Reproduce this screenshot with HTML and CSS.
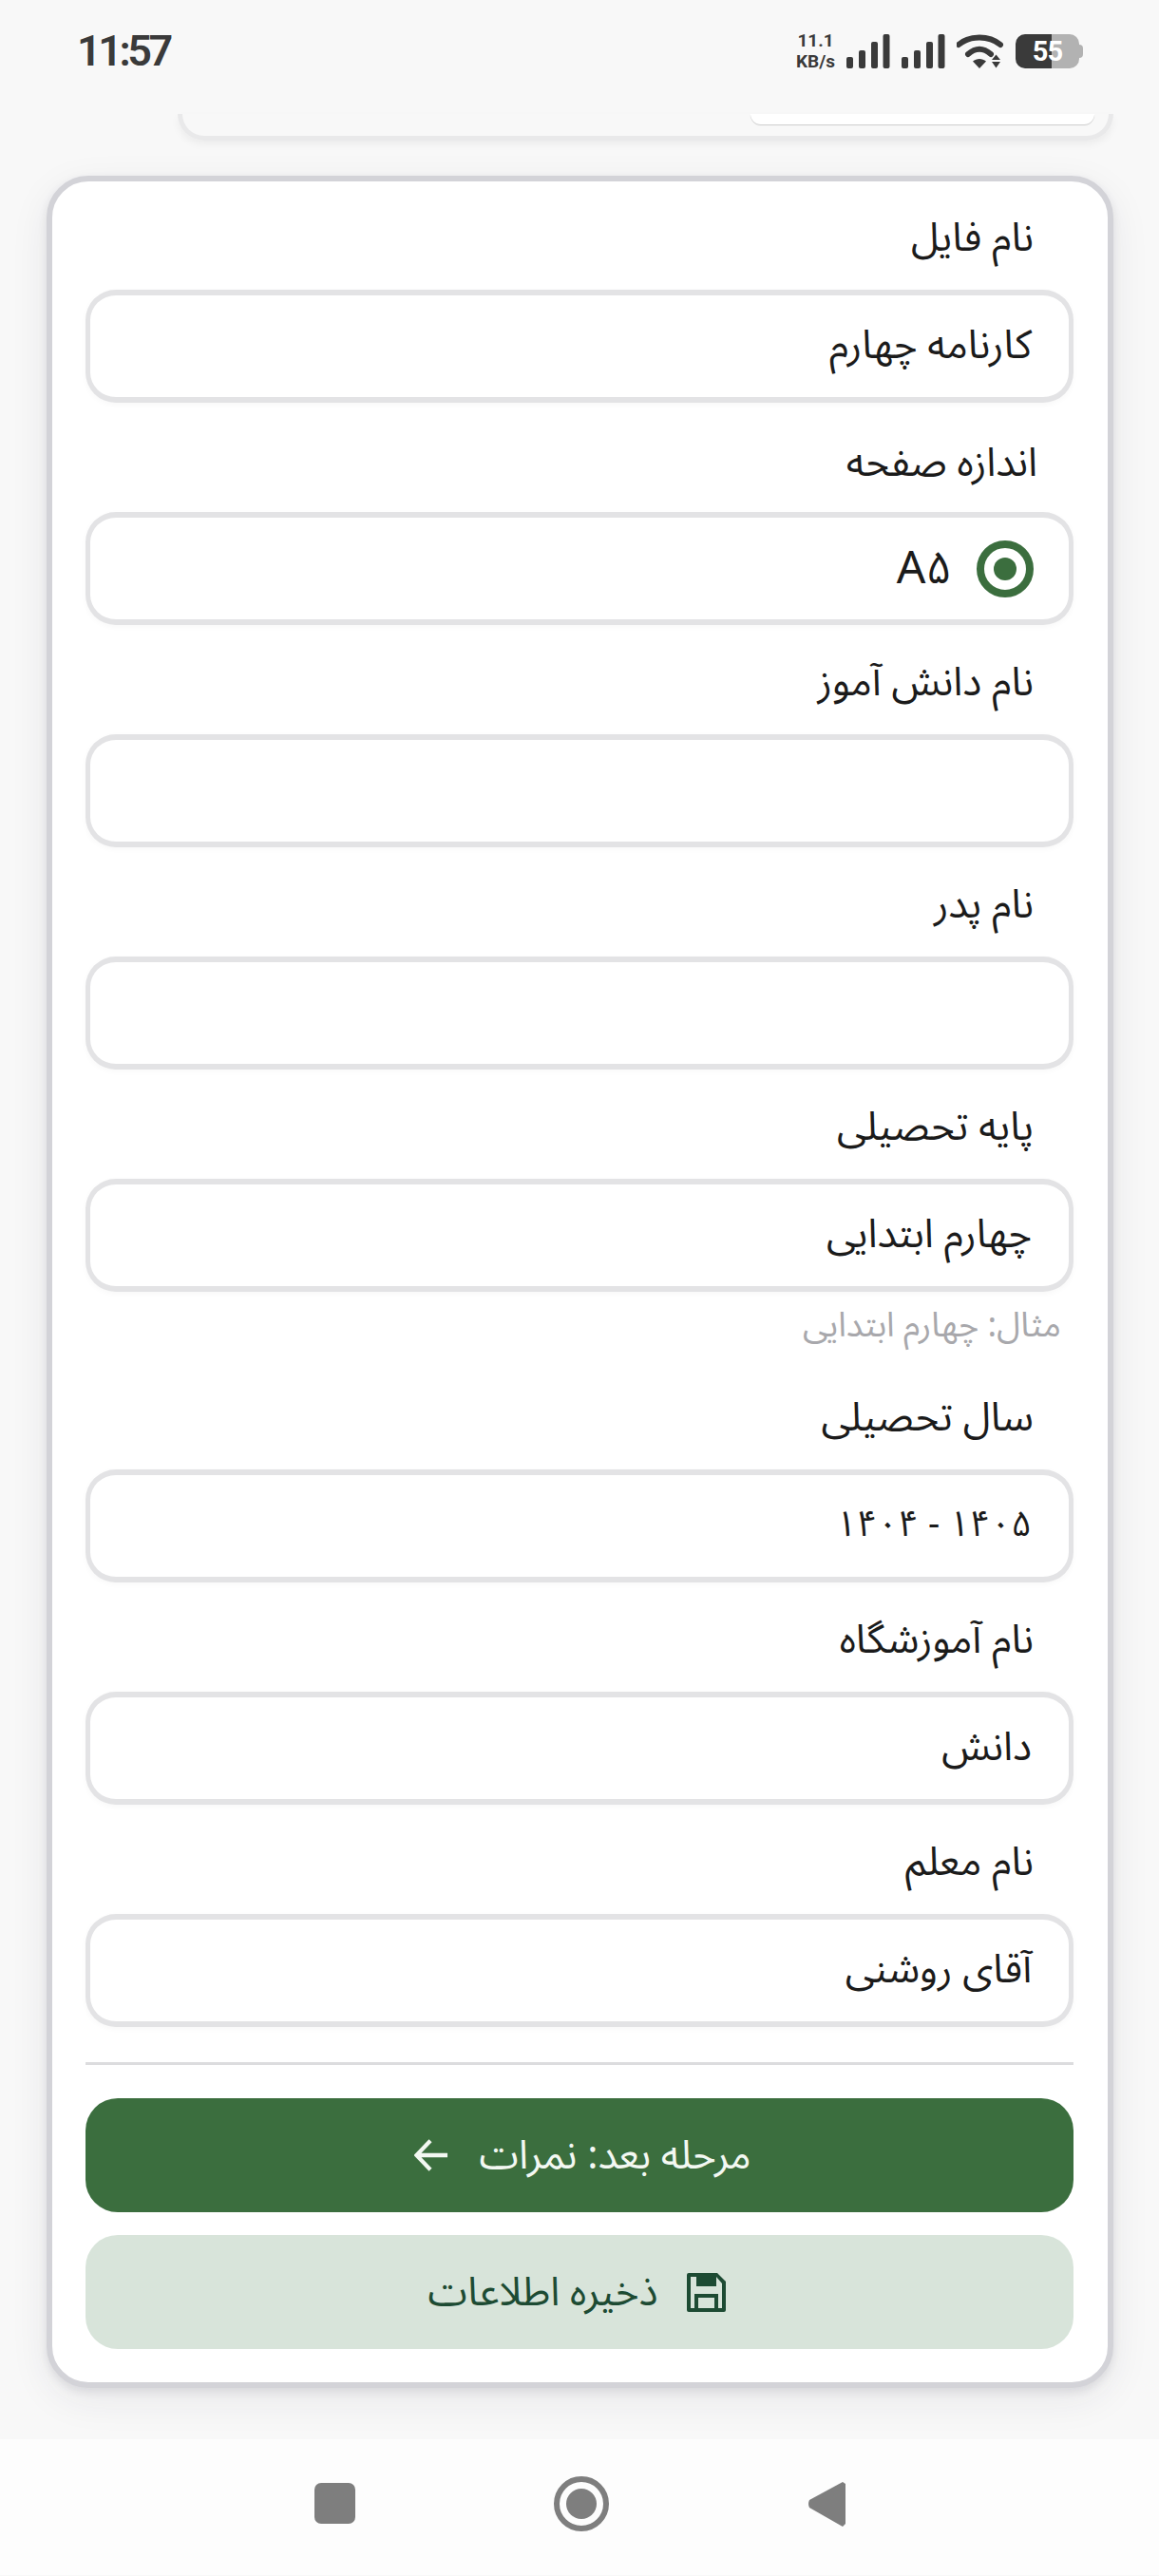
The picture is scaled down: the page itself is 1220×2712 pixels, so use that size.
FILE: index.html
```html
<!DOCTYPE html>
<html lang="fa">
<head>
<meta charset="utf-8">
<title>کارنامه</title>
<link rel="stylesheet" href="styles.css">
</head>
<body>
<div class="screen">
  <header class="status">
    <span class="time">11:57</span>
    <div class="status-icons">
      <div class="speed"><span>11.1</span><span>KB/s</span></div>
      <svg class="signal" viewBox="0 0 46 36"><rect x="0" y="24" width="7" height="12" rx="2"/><rect x="13" y="17" width="7" height="19" rx="2"/><rect x="26" y="8" width="7" height="28" rx="2"/><rect x="38.500" y="0" width="7" height="36" rx="2"/></svg>
      <svg class="signal" viewBox="0 0 46 36"><rect x="0" y="24" width="7" height="12" rx="2"/><rect x="13" y="17" width="7" height="19" rx="2"/><rect x="26" y="8" width="7" height="28" rx="2"/><rect x="38.500" y="0" width="7" height="36" rx="2"/></svg>
      <svg class="wifi" viewBox="0 0 50 36"><path class="wifi-arc" d="M2 11C14 1 34 1 46 11"/><path class="wifi-arc" d="M12 21C20 14 28 14 36 21"/><path d="M17 28.500C21 25 27 25 31 28.500L24 36Z"/><path d="M41.500 21.500 46 27H37ZM37 29H46L41.500 35.500Z"/></svg>
      <div class="battery"><span>55</span></div>
    </div>
  </header>

  <div class="peek"><div class="peek-pill"></div></div>

  <main class="card" dir="rtl">
    <section class="group">
      <div class="label">نام فایل</div>
      <div class="field">کارنامه چهارم</div>
    </section>
    <section class="group">
      <div class="label label-size">اندازه صفحه</div>
      <div class="field field-radio"><span class="radio"></span><span class="radio-text">A۵</span></div>
    </section>
    <section class="group">
      <div class="label">نام دانش آموز</div>
      <div class="field"></div>
    </section>
    <section class="group">
      <div class="label">نام پدر</div>
      <div class="field"></div>
    </section>
    <section class="group">
      <div class="label">پایه تحصیلی</div>
      <div class="field">چهارم ابتدایی</div>
      <div class="hint">مثال: چهارم ابتدایی</div>
    </section>
    <section class="group">
      <div class="label">سال تحصیلی</div>
      <div class="field field-digits">۱۴۰۵ - ۱۴۰۴</div>
    </section>
    <section class="group">
      <div class="label">نام آموزشگاه</div>
      <div class="field">دانش</div>
    </section>
    <section class="group">
      <div class="label">نام معلم</div>
      <div class="field">آقای روشنی</div>
    </section>
    <hr class="divider">
    <div class="btn btn-primary">
      <span>مرحله بعد: نمرات</span>
      <svg class="arrow" viewBox="0 0 38 36"><path d="M37 18H3M18 2 2.500 18 18 34"/></svg>
    </div>
    <div class="btn btn-secondary">
      <svg class="save" viewBox="0 0 41 41"><path fill-rule="evenodd" d="M2 0H32L41 9V39A2 2 0 0 1 39 41H2A2 2 0 0 1 0 39V2A2 2 0 0 1 2 0ZM4 4V37H8V22H33V37H37V11L31 4V14H10V4ZM12 26V37H29V26Z"/></svg>
      <span>ذخیره اطلاعات</span>
    </div>
  </main>

  <nav class="nav">
    <span class="nav-square"></span>
    <span class="nav-circle"></span>
    <svg class="nav-back" viewBox="0 0 40 50"><path d="M37 2 40 4V46L37 49 2 29Q0 25 2 21Z"/></svg>
  </nav>
</div>
</body>
</html>
```
FILE: styles.css
```css
* { box-sizing: border-box; }
html, body { margin: 0; padding: 0; }
body {
  background: #f8f8f8;
  color: #1b1b1b;
  font-family: "Noto Sans Arabic", "Vazirmatn", "DejaVu Sans", sans-serif;
}
.screen {
  width: 1220px;
  height: 2712px;
  display: flex;
  flex-direction: column;
  overflow: hidden;
}

/* status bar */
.status {
  height: 120px;
  flex: none;
  display: flex;
  justify-content: space-between;
  align-items: flex-start;
  padding: 24px 80px 0 81px;
}
.time {
  font: 600 45px/60px Roboto, sans-serif;
  color: #3a3a3a;
  letter-spacing: -3.500px;
}
.status-icons {
  display: flex;
  align-items: flex-start;
  gap: 12px;
  padding-top: 12px;
}
.speed {
  display: flex;
  flex-direction: column;
  align-items: center;
  font: 700 19px/22px Roboto, sans-serif;
  color: #3a3a3a;
  margin-top: -4px;
}
.signal { width: 46px; height: 36px; fill: #3a3a3a; }
.wifi { width: 50px; height: 36px; fill: #3a3a3a; }
.wifi-arc { fill: none; stroke: #3a3a3a; stroke-width: 6; stroke-linecap: round; }
.battery {
  position: relative;
  width: 67px;
  height: 36px;
  margin-right: 4px;
  border-radius: 10px;
  background: linear-gradient(90deg, #3a3a3a 56%, #b2b2b2 56%);
  display: flex;
  align-items: center;
  justify-content: center;
}
.battery::after {
  content: "";
  position: absolute;
  right: -4px;
  top: 11px;
  width: 4px;
  height: 14px;
  border-radius: 0 4px 4px 0;
  background: #b2b2b2;
}
.battery span {
  font: 700 29px/36px Roboto, sans-serif;
  color: #fff;
  letter-spacing: -1px;
}

/* clipped card above */
.peek {
  flex: none;
  height: 28px;
  margin-left: 187px;
  width: 985px;
  border: solid #e9e9ea;
  border-width: 0 5px 5px 5px;
  border-radius: 0 0 30px 30px;
  box-shadow: 0 4px 8px rgba(0, 0, 0, 0.05);
  display: flex;
  justify-content: flex-end;
  padding-right: 15px;
}
.peek-pill {
  width: 362px;
  height: 11px;
  background: #fff;
  border-radius: 0 0 16px 16px;
  box-shadow: 0 1px 1px rgba(0, 0, 0, 0.18);
}

/* main card */
.card {
  flex: none;
  position: relative;
  margin: 37px 48px 0 49px;
  border: 6px solid #d3d3d8;
  border-radius: 44px;
  background: #fff;
  padding: 30px 36px 35px 35px;
  box-shadow: 0 4px 10px rgba(40, 40, 60, 0.1), 0 12px 40px rgba(40, 40, 60, 0.08);
}
.group { padding-bottom: 31px; }
.group:nth-last-of-type(1) { padding-bottom: 0; }
.label {
  height: 60px;
  line-height: 60px;
  margin-bottom: 24px;
  padding-right: 42px;
  font-size: 42px;
  white-space: nowrap;
}
.label-size { padding-right: 38px; line-height: 66px; }
.field {
  height: 119px;
  border: solid #e3e3e5;
  border-width: 6px 5px;
  border-radius: 32px;
  background: #fff;
  padding: 0 39px;
  font-size: 42px;
  line-height: 105px;
  white-space: nowrap;
  box-shadow: 0 2px 6px rgba(0, 0, 0, 0.03);
}
.field-digits { font-size: 38px; }
.field-radio {
  display: flex;
  align-items: center;
  gap: 26px;
  padding-right: 37px;
}
.radio {
  width: 60px;
  height: 60px;
  flex: none;
  border: 8px solid #3b6e3e;
  border-radius: 50%;
  display: flex;
  align-items: center;
  justify-content: center;
}
.radio::before {
  content: "";
  width: 24px;
  height: 24px;
  border-radius: 50%;
  background: #3b6e3e;
}
.radio-text { font-size: 48px; line-height: 60px; }
.hint {
  height: 48px;
  line-height: 48px;
  margin: 12px 0;
  padding-right: 13px;
  font-size: 36px;
  color: #a8a8ac;
  white-space: nowrap;
}
.divider {
  height: 3px;
  margin: 37px 0 35px;
  border: 0;
  background: #dcdcde;
}
.btn {
  height: 120px;
  border-radius: 34px;
  display: flex;
  align-items: center;
  justify-content: center;
  font-size: 42px;
  white-space: nowrap;
}
.btn-primary {
  background: #3b6e3e;
  color: #f3f8f2;
  gap: 32px;
  padding-left: 7px;
  margin-bottom: 24px;
}
.btn-secondary {
  background: #d8e4da;
  color: #1d4b33;
  gap: 31px;
  padding-right: 5px;
}
.arrow { width: 36px; height: 36px; fill: none; stroke: #f3f8f2; stroke-width: 4.500; }
.save { width: 41px; height: 41px; fill: #1d4b33; }

/* navigation */
.nav {
  flex: none;
  position: relative;
  margin-top: 54px;
  height: 143px;
  background: #fdfdfd;
  display: flex;
  align-items: center;
  justify-content: center;
  gap: 209px;
  padding-bottom: 8px;
}
.nav-square {
  width: 43px;
  height: 43px;
  border-radius: 7px;
  background: #7e7e7e;
}
.nav-circle {
  width: 58px;
  height: 58px;
  border: 6px solid #7e7e7e;
  border-radius: 50%;
  display: flex;
  align-items: center;
  justify-content: center;
}
.nav-circle::before {
  content: "";
  width: 32px;
  height: 32px;
  border-radius: 50%;
  background: #7e7e7e;
}
.nav-back { width: 40px; height: 50px; fill: #7e7e7e; }
```
